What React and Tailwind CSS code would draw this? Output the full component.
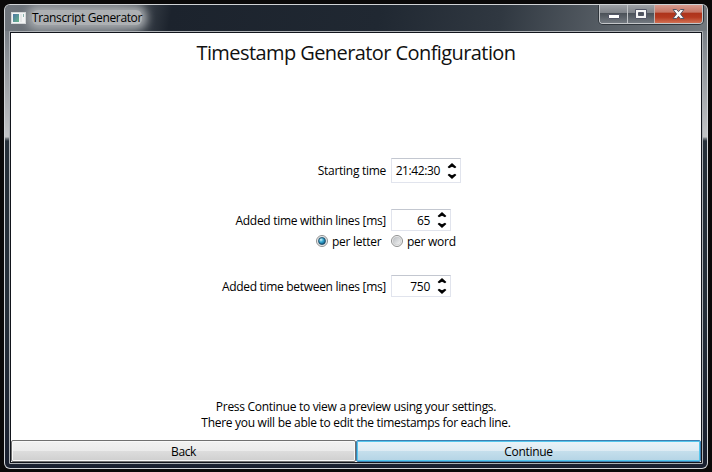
import React from 'react';

function Spinner({ value, time }) {
  return (
    <div className={`flex items-center justify-end border border-[#e1e4ed] border-t-[#c3c7d0] bg-white pr-[3px] ${time ? 'h-[25px] w-[70px]' : 'h-[22px] w-[60px]'}`}>
      <span className={time ? 'tracking-[-0.39px]' : 'mt-[2px] tracking-[-0.3px]'}>{value}</span>
      <svg className="ml-[7px]" width="10" height="18" viewBox="0 0 10 18">
        <path d="M5 1 L9.4 5 L8 6.3 L5 4.7 L2 6.3 L.6 5z" />
        <path d="M5 17 L9.4 13 L8 11.7 L5 13.3 L2 11.7 L.6 13z" />
      </svg>
    </div>
  );
}

function Radio({ checked, label }) {
  return (
    <div className="flex items-center">
      <svg width="12" height="12" viewBox="0 0 12 12" className="-mt-[2px]">
        <defs>
          <linearGradient id="ring" x1="0" y1="0" x2="1" y2="1">
            <stop offset="0" stopColor="#b8bcc0" />
            <stop offset="1" stopColor="#f6f6f6" />
          </linearGradient>
          <radialGradient id="dot" cx="0.35" cy="0.3" r="0.7">
            <stop offset="0" stopColor="#d5f4fc" />
            <stop offset="0.5" stopColor="#37a9d2" />
            <stop offset="1" stopColor="#12638d" />
          </radialGradient>
        </defs>
        <circle cx="6" cy="6" r="5.5" fill="#f4f4f4" stroke="#8e8f8f" />
        <circle cx="6" cy="6" r="4" fill="url(#ring)" stroke={checked ? '#a9b8c2' : '#c4c6c8'} strokeWidth="0.6" />
        {checked && <circle cx="6" cy="6" r="3.4" fill="url(#dot)" stroke="#173f5b" strokeWidth="0.8" />}
      </svg>
      <span className="ml-[4px] tracking-[-0.27px]">{label}</span>
    </div>
  );
}

function WindowControls() {
  return (
    <div className="flex h-[20px] w-[104px] overflow-hidden rounded-b-[4px] border border-t-0 border-[#c3c6c9] shadow-[0_0_0_1px_#30363c]">
      <div className="flex w-[28px] items-center justify-center border-r border-[#c0c3c6] bg-[linear-gradient(#a1a4a8_0%,#80848a_45%,#4c5259_50%,#737980_100%)]">
        <svg width="12" height="5" viewBox="0 0 12 5" className="mt-[5px]">
          <rect x="0.5" y="0.5" width="11" height="4" rx="0.5" fill="#fff" stroke="#535666" />
        </svg>
      </div>
      <div className="flex w-[27px] items-center justify-center border-r border-[#c0b0ad] bg-[linear-gradient(#a1a4a8_0%,#80848a_45%,#4c5259_50%,#737980_100%)]">
        <svg width="12" height="10" viewBox="0 0 12 10">
          <path fillRule="evenodd" d="M.5 .5h11v9H.5z M3.5 3.5v3h5v-3z" fill="#f6f6f6" stroke="#535666" />
        </svg>
      </div>
      <div className="flex flex-1 items-center justify-center bg-[linear-gradient(#dba095_0%,#c77766_42%,#ae341b_50%,#b53a20_70%,#d17053_100%)]">
        <svg width="13" height="12" viewBox="0 0 13 12">
          <path d="M1 1.5h3.5l2 2.2 2-2.2H12L8.5 6l3.5 4.5H8.5l-2-2.2-2 2.2H1L4.5 6z" fill="#fafafa" stroke="#535666" />
        </svg>
      </div>
    </div>
  );
}

export default function App() {
  return (
    <div className="h-[472px] w-[712px] overflow-hidden bg-[#0a0909] pl-[4px] pt-[4px] font-['Open_Sans','Noto_Sans',sans-serif] text-[12px] leading-[16px] text-black">
      <div className="h-[465px] w-[704px] rounded-[6px] bg-[#d0d3d6] p-px">
        <div className="h-[463px] w-[702px] rounded-[5px] bg-[linear-gradient(#646b72_0px,#8b9096_50px,#c2c4c6_132px,#858a8e_133px,#263039_136px,#26303a_300px,#1a2130_100%)] px-[4px]">
          <div className="-mx-[4px] flex h-[26px] overflow-hidden rounded-t-[5px] bg-[linear-gradient(100deg,#70767d_0px,#596067_110px,#1c232d_165px,#202832_370px,#303841_490px,#596067_600px,#757b80_702px)]">
            <div className="flex h-[26px] items-center pl-[6px]">
              <svg width="15" height="12" viewBox="0 0 15 12" className="relative">
                <defs>
                  <linearGradient id="app" x1="0" y1="0" x2="1" y2="1">
                    <stop stopColor="#4b76a4" /><stop offset="1" stopColor="#69b58b" />
                  </linearGradient>
                </defs>
                <rect x="0.5" y="0.5" width="14" height="11" fill="#f3f4f5" stroke="#d5d8da" />
                <rect x="2" y="2" width="6" height="8" fill="url(#app)" />
                <path d="M9 2h2v8H9z" fill="#e5e7e8" />
                <path d="M12 2h1v3h-1z" fill="#8bb4ad" />
              </svg>
              <span className="-mt-px ml-[6px] h-[15px] whitespace-nowrap rounded-[6px] bg-[#adb0b3] leading-[15px] tracking-[-0.36px] shadow-[0_0_9px_5px_#a4a8ac]">Transcript Generator</span>
            </div>
            <div className="ml-auto mr-[4px] -mt-px h-[20px]"><WindowControls /></div>
          </div>
          <div className="h-[433px] w-[694px] rounded-[1px] border border-[#adb1b5] bg-white">
            <div className="flex h-[431px] w-[692px] flex-col border border-[#12151c]">
              <h1 className="mt-[6px] text-center text-[20px] leading-[28px] tracking-[-0.58px] text-[#111]">Timestamp Generator Configuration</h1>
              <div className="mt-[91px] flex h-[25px] items-center">
                <span className="mr-[5px] w-[375px] text-right tracking-[-0.28px]">Starting time</span>
                <Spinner value="21:42:30" time />
              </div>
              <div className="mt-[26px] flex h-[22px] items-center">
                <span className="mr-[5px] mt-[2px] w-[375px] text-right tracking-[-0.3px]">Added time within lines [ms]</span>
                <Spinner value="65" />
              </div>
              <div className="mt-[3px] flex h-[16px] items-center pl-[305px]">
                <div className="w-[75px]"><Radio checked label="per letter" /></div>
                <Radio label="per word" />
              </div>
              <div className="mt-[25px] flex h-[22px] items-center">
                <span className="mr-[5px] mt-[2px] w-[375px] text-right tracking-[-0.31px]">Added time between lines [ms]</span>
                <Spinner value="750" />
              </div>
              <div className="mt-auto mb-[9px] text-center tracking-[-0.29px]">
                <p>Press Continue to view a preview using your settings.</p>
                <p>There you will be able to edit the timestamps for each line.</p>
              </div>
              <div className="flex h-[22px]">
                <button className="h-[22px] w-[345px] rounded-[2px] border border-[#707070] bg-[linear-gradient(#f2f2f2_0%,#ebebeb_50%,#dddddd_50%,#cfcfcf_100%)] pt-px leading-[19px] tracking-[-0.4px] shadow-[inset_0_0_0_1px_#f8f8f8]">Back</button>
                <button className="h-[22px] w-[345px] rounded-[2px] border border-[#3c7fb1] bg-[linear-gradient(#eaf3f8_0%,#ddebf3_50%,#c5dfec_50%,#b4d4e5_100%)] pt-px leading-[19px] tracking-[-0.3px] shadow-[inset_0_0_0_1px_#55c6ed]">Continue</button>
              </div>
            </div>
          </div>
        </div>
      </div>
    </div>
  );
}
